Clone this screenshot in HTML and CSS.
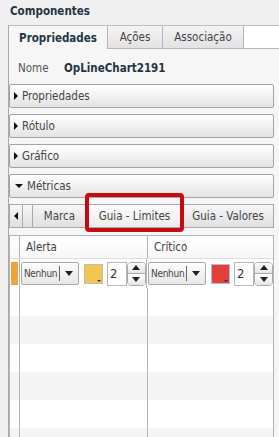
FILE: index.html
```html
<!DOCTYPE html>
<html>
<head>
<meta charset="utf-8">
<link rel="stylesheet" href="styles.css">
</head>
<body>
<div class="title">Componentes</div>
<div class="panel">
  <div class="tabs">
    <div class="tab active">Propriedades</div>
    <div class="tab tab-acoes">Ações</div>
    <div class="tab tab-assoc">Associação</div>
    <div class="tab-fill"></div>
  </div>
  <div class="nome-row">
    <span class="nome-label">Nome</span>
    <span class="nome-value">OpLineChart2191</span>
  </div>
  <div class="acc"><span class="tri-right"></span>Propriedades</div>
  <div class="acc"><span class="tri-right"></span>Rótulo</div>
  <div class="acc"><span class="tri-right"></span>Gráfico</div>
  <div class="acc"><span class="tri-down"></span>Métricas</div>

  <div class="subtabs">
    <div class="stab scroll"><span class="tri-left"></span></div>
    <div class="stab partial"></div>
    <div class="stab marca">Marca</div>
    <div class="stab sactive">Guia - Limites</div>
    <div class="stab valores">Guia - Valores</div>
    <div class="highlight"></div>
  </div>

  <div class="grid">
    <div class="grow ghead">
      <div class="rh"></div>
      <div class="gc">Alerta</div>
      <div class="gc last">Crítico</div>
    </div>
    <div class="grow gdata">
      <div class="rh"><div class="marker"></div></div>
      <div class="gc cell">
        <div class="sel"><span class="seltext">Nenhun</span><span class="caret"></span><span class="tri-dn-s"></span></div>
        <div class="swatch yellow"><span class="sw-dot"></span></div>
        <div class="spin"><span class="spinval">2</span></div>
        <div class="spinbtns"><span class="sb up"><span class="tri-up-s"></span></span><span class="sb dn"><span class="tri-dn-s"></span></span></div>
      </div>
      <div class="gc cell last">
        <div class="sel"><span class="seltext">Nenhun</span><span class="caret"></span><span class="tri-dn-s"></span></div>
        <div class="swatch red"><span class="sw-dot"></span></div>
        <div class="spin"><span class="spinval">2</span></div>
        <div class="spinbtns"><span class="sb up"><span class="tri-up-s"></span></span><span class="sb dn"><span class="tri-dn-s"></span></span></div>
      </div>
    </div>
    <div class="grow"><div class="rh"></div><div class="gc"></div><div class="gc last"></div></div>
    <div class="grow stripe"><div class="rh"></div><div class="gc"></div><div class="gc last"></div></div>
    <div class="grow"><div class="rh"></div><div class="gc"></div><div class="gc last"></div></div>
    <div class="grow stripe"><div class="rh"></div><div class="gc"></div><div class="gc last"></div></div>
    <div class="grow"><div class="rh"></div><div class="gc"></div><div class="gc last"></div></div>
    <div class="grow stripe"><div class="rh"></div><div class="gc"></div><div class="gc last"></div></div>
  </div>
</div>
</body>
</html>
```
FILE: styles.css
```css
html, body {
  margin: 0;
  padding: 0;
}
body {
  width: 279px;
  height: 437px;
  overflow: hidden;
  background: #f0f0f0;
  font-family: "DejaVu Sans Condensed", "DejaVu Sans", sans-serif;
  font-size: 11px;
  color: #333;
}
.title {
  height: 25px;
  box-sizing: border-box;
  padding: 4px 0 0 10px;
  font-weight: bold;
  font-size: 11.5px;
  color: #1e3546;
}
.panel {
  margin-left: 8px;
  border-left: 1px solid #a9a9a9;
  background: #f6f6f6;
  height: 412px;
  position: relative;
}
.tabs {
  display: flex;
  height: 23px;
  border-top: 1px solid #bdbdbd;
  background: #fff;
}
.tab {
  box-sizing: border-box;
  height: 23px;
  display: flex;
  align-items: center;
  justify-content: center;
  border-right: 1px solid #b5b5b5;
  border-bottom: 1px solid #b5b5b5;
  background: linear-gradient(#f4f4f4, #e2e2e2);
  font-size: 11.5px;
  color: #444;
}
.tab.active {
  width: 99px;
  background: #f6f6f6;
  border-bottom: none;
  font-weight: bold;
  color: #1e3546;
}
.tab-acoes { width: 55px; }
.tab-assoc { width: 81px; }
.tab-fill {
  flex: 1;
  border-bottom: 1px solid #b5b5b5;
  box-sizing: border-box;
}
.nome-row {
  height: 35px;
  display: flex;
  align-items: center;
  padding-left: 9px;
  padding-top: 2px;
  box-sizing: border-box;
}
.nome-label {
  width: 46px;
  color: #555;
  font-size: 11.5px;
}
.nome-value {
  font-weight: bold;
  font-size: 11.5px;
  color: #1e3546;
}
.acc {
  box-sizing: border-box;
  height: 24px;
  margin: 0 5px 6px 0;
  border: 1px solid #a3a3a3;
  border-radius: 2px;
  background: linear-gradient(#ffffff, #e3e3e3);
  display: flex;
  align-items: center;
  padding-left: 4px;
  font-size: 11.5px;
  color: #444;
}
.tri-right {
  width: 0; height: 0;
  border-top: 4px solid transparent;
  border-bottom: 4px solid transparent;
  border-left: 4px solid #111;
  margin-right: 4px;
}
.tri-down {
  width: 0; height: 0;
  border-left: 4px solid transparent;
  border-right: 4px solid transparent;
  border-top: 4px solid #111;
  margin-right: 4px;
  margin-left: 1px;
}
.tri-left {
  width: 0; height: 0;
  border-top: 4px solid transparent;
  border-bottom: 4px solid transparent;
  border-right: 4px solid #111;
}
.subtabs {
  position: relative;
  display: flex;
  height: 24px;
  margin: 5px 5px 0 0;
}
.stab {
  box-sizing: border-box;
  height: 24px;
  display: flex;
  align-items: center;
  justify-content: center;
  border: 1px solid #a8a8a8;
  border-left: none;
  background: linear-gradient(#f6f6f6, #e0e0e0);
  font-size: 11.5px;
  color: #444;
}
.stab.scroll {
  width: 14px;
  border-left: 1px solid #a8a8a8;
}
.stab.partial { width: 10px; }
.stab.marca { width: 54px; }
.stab.sactive {
  width: 96px;
  background: linear-gradient(#fbfbfb, #ececec);
}
.stab.valores { flex: 1; }
.highlight {
  position: absolute;
  left: 76px;
  top: -11px;
  width: 99px;
  height: 39px;
  box-sizing: border-box;
  border: 4px solid #c70a0f;
  border-radius: 4px;
}
.grid {
  margin: 7px 5px 0 0;
  border: 1px solid #b4b4b4;
  border-bottom: none;
  background: #fff;
}
.grow {
  display: flex;
  height: 28px;
}
.grow.stripe { background: #f4f4f4; }
.ghead {
  height: 22px;
  background: linear-gradient(#ffffff, #f7f7f7);
  border-bottom: 1px solid #dedede;
}
.gdata { height: 29px; }
.rh {
  width: 9px;
  border-right: 1px solid #b4b4b4;
  position: relative;
}
.gc {
  width: 128px;
  border-right: 1px solid #b4b4b4;
  box-sizing: border-box;
  display: flex;
  align-items: center;
  padding-left: 6px;
  font-size: 11.5px;
  color: #444;
}
.gc.last {
  flex: 1;
  border-right: none;
}
.gc.cell {
  padding-left: 1px;
}
.marker {
  position: absolute;
  left: 1px;
  top: 3px;
  width: 7px;
  height: 23px;
  background: #f2a23d;
}
.sel {
  box-sizing: border-box;
  width: 58px;
  height: 23px;
  border: 1px solid #a9a9a9;
  border-radius: 2px;
  background: linear-gradient(#fdfdfd, #e6e6e6);
  display: flex;
  align-items: center;
  padding-left: 2px;
  font-size: 10px;
  letter-spacing: -0.3px;
  color: #444;
  flex-shrink: 0;
}
.seltext {
  width: 35px;
  flex-shrink: 0;
  white-space: nowrap;
}
.caret {
  width: 1px;
  height: 15px;
  background: #666;
  margin-right: 5px;
  flex-shrink: 0;
}
.tri-dn-s {
  width: 0; height: 0;
  border-left: 4px solid transparent;
  border-right: 4px solid transparent;
  border-top: 5px solid #222;
}
.tri-up-s {
  width: 0; height: 0;
  border-left: 4px solid transparent;
  border-right: 4px solid transparent;
  border-bottom: 5px solid #222;
}
.swatch {
  box-sizing: border-box;
  width: 19px;
  height: 20px;
  margin-left: 5px;
  border: 1px solid #bcbcbc;
  position: relative;
  flex-shrink: 0;
}
.swatch.yellow { background: #f3c653; }
.swatch.red { background: #e53f3d; }
.sw-dot {
  position: absolute;
  right: 1px;
  bottom: 1px;
  width: 0; height: 0;
  border-left: 2px solid transparent;
  border-right: 2px solid transparent;
  border-top: 2px solid #333;
}
.spin {
  box-sizing: border-box;
  width: 20px;
  height: 24px;
  margin-left: 4px;
  border: 1px solid #b8b8b8;
  background: #fff;
  display: flex;
  align-items: center;
  padding-left: 2px;
  font-size: 13px;
  color: #333;
  flex-shrink: 0;
}
.spinbtns {
  box-sizing: border-box;
  width: 19px;
  height: 24px;
  border: 1px solid #a9a9a9;
  border-radius: 4px;
  display: flex;
  flex-direction: column;
  overflow: hidden;
  flex-shrink: 0;
}
.sb {
  flex: 1;
  display: flex;
  align-items: center;
  justify-content: center;
  background: linear-gradient(#fdfdfd, #e6e6e6);
}
.sb.up { border-bottom: 1px solid #a9a9a9; }
```
